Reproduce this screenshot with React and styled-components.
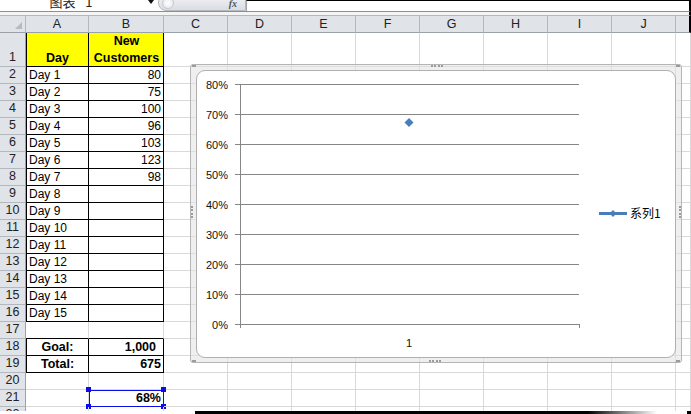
import React from 'react'
import styled, { createGlobalStyle } from 'styled-components'

const GlobalStyle = createGlobalStyle`
	html, body {
		margin: 0;
		padding: 0;
		background: #fff;
	}
	body {
		font-family: "Liberation Sans", Arial, sans-serif;
		width: 691px;
		height: 414px;
		overflow: hidden;
	}
`

const Window = styled.div`
	position: relative;
	width: 691px;
	height: 414px;
	overflow: hidden;
	display: flex;
	flex-direction: column;
	color: #000;
`

const FormulaBar = styled.div`
	height: 11px;
	display: flex;
	border-bottom: 1px solid #8f8f8f;
	border-right: 2px solid #000;
	overflow: hidden;
`

const NameBox = styled.div`
	position: relative;
	width: 158px;
	display: flex;
	justify-content: center;
	font-family: "Noto Sans CJK SC", sans-serif;
	font-size: 13px;
	line-height: 13px;
	word-spacing: 7px;
	color: #222;
	& > span {
		margin-top: -5px;
		margin-left: -16px;
	}
`

const DropArrow = styled.i`
	position: absolute;
	right: 4px;
	top: 0;
	width: 0;
	height: 0;
	border-left: 3px solid transparent;
	border-right: 3px solid transparent;
	border-top: 4px solid #111;
`

const Splitter = styled.div`
	position: relative;
	width: 78px;
	margin-top: -6px;
	border: 1px solid #b7bbc1;
	border-radius: 8px 0 0 8px;
	background: linear-gradient(#f4f5f7, #d9dce1);
	display: flex;
	justify-content: flex-end;
	align-items: flex-end;
	padding: 0 8px 1px 0;
	font-family: "Liberation Serif", serif;
	font-style: italic;
	font-weight: 700;
	font-size: 10px;
	color: #555;
	&::before {
		content: '';
		position: absolute;
		left: 3px;
		top: 2px;
		width: 10px;
		height: 10px;
		border-radius: 50%;
		background: radial-gradient(#fff, #e2e4e8);
		border: 1px solid #c5c9ce;
	}
`

const FormulaInput = styled.div`
	flex: 1;
	border-top: 1px solid #000;
	border-left: 1px solid #a0a4aa;
	background: #fff;
`

const Gap = styled.div`
	height: 3px;
	background: #f4f4f4;
	border-right: 2px solid #000;
`

const Sheet = styled.div`
	position: relative;
	display: grid;
	grid-template-columns: 26px 63px 75px repeat(8, 64px) 1fr;
	grid-template-rows: 18px 34px repeat(21, 17px);
	height: 396px;
	overflow: hidden;
`

const Head = styled.div`
	box-sizing: border-box;
	background: #e0e3e8;
	border-top: 1px solid #b3b8be;
	border-right: ${p => p.$last ? '2px solid #000' : '1px solid #b3b8be'};
	border-bottom: 1px solid #9ba1a8;
	display: flex;
	align-items: center;
	justify-content: center;
	font-size: 12.5px;
	color: #222;
	position: relative;
`

const Corner = styled(Head)`
	&::after {
		content: '';
		position: absolute;
		right: 3px;
		bottom: 3px;
		width: 0;
		height: 0;
		border-left: 7px solid transparent;
		border-bottom: 7px solid #b6bbc1;
	}
`

const RowHead = styled.div`
	box-sizing: border-box;
	background: #e0e3e8;
	border-right: 1px solid #9ba1a8;
	border-bottom: 1px solid #b3b8be;
	display: flex;
	align-items: flex-end;
	justify-content: center;
	padding-bottom: 1px;
	font-size: 12.5px;
	line-height: 15px;
	color: #222;
`

const Cell = styled.div`
	box-sizing: border-box;
	position: relative;
	border-right: 1px solid ${p => p.$boxed ? '#000' : '#d9d9d9'};
	border-bottom: 1px solid ${p => p.$boxed || p.$under ? '#000' : '#d9d9d9'};
	box-shadow: ${p => p.$leftEdge ? 'inset 1px 0 0 #000' : 'none'};
	background: ${p => p.$fill || 'transparent'};
	font-size: ${p => p.$bold ? '12.5px' : '12px'};
	font-weight: ${p => p.$bold ? 700 : 400};
	line-height: ${p => p.$tall ? '16.5px' : '15px'};
	display: flex;
	align-items: flex-end;
	justify-content: ${p => p.$align === 'right' ? 'flex-end' : p.$align === 'center' ? 'center' : 'flex-start'};
	text-align: ${p => p.$align || 'left'};
	padding: 0 ${p => p.$padR ?? 2}px 0 3px;
	white-space: pre-line;
	${p => p.$selected && `
		outline: 1px solid #0c0ce6;
		outline-offset: -1px;
	`}
`

const Handle = styled.i`
	position: absolute;
	width: 5px;
	height: 5px;
	background: #0c0ce6;
	${p => p.$top ? 'top: -3px;' : 'bottom: -3px;'}
	${p => p.$left ? 'left: -3px;' : 'right: -3px;'}
`

const ChartFrame = styled.div`
	position: absolute;
	left: 190px;
	top: 49px;
	width: 492px;
	height: 299px;
	box-sizing: border-box;
	border: 1px solid #b5b5b5;
	border-radius: 3px;
	background: rgba(226, 226, 226, 0.55);
	padding: 5px 5px 4px 5px;
	z-index: 2;
`

const ChartArea = styled.div`
	height: 100%;
	box-sizing: border-box;
	background: #fff;
	border: 1px solid #b0b0b0;
	border-radius: 9px;
	overflow: hidden;
`

const Dots = styled.i`
	position: absolute;
	${p => p.$vertical ? `
		width: 0;
		height: ${p.$len || 12}px;
		border-left: 2px dotted #9c9c9c;
	` : `
		width: ${p.$len || 12}px;
		height: 0;
		border-top: 2px dotted #9c9c9c;
	`}
`

const Footer = styled.div`
	height: 3px;
	display: flex;
`

const FooterPart = styled.div`
	width: ${p => p.$w ? p.$w + 'px' : 'auto'};
	flex: ${p => p.$w ? 'none' : 1};
	background: ${p => p.$bg};
`

const cols = ['A', 'B', 'C', 'D', 'E', 'F', 'G', 'H', 'I', 'J']
const customers = [80, 75, 100, 96, 103, 123, 98]

const buildRows = () => {
	const rows = []
	rows.push({ n: 1, a: { text: 'Day', bold: true, align: 'center', fill: '#ffff00', boxed: true, leftEdge: true }, b: { text: 'New\nCustomers', bold: true, align: 'center', fill: '#ffff00', boxed: true, tall: true } })
	for (let r = 2; r <= 16; r++) {
		const v = customers[r - 2]
		rows.push({ n: r, a: { text: `Day ${r - 1}`, boxed: true, leftEdge: true }, b: { text: v != null ? String(v) : '', align: 'right', boxed: true } })
	}
	rows.push({ n: 17, a: { under: true }, b: { under: true } })
	rows.push({ n: 18, a: { text: 'Goal:', bold: true, align: 'center', boxed: true, leftEdge: true }, b: { text: '1,000', bold: true, align: 'right', boxed: true, padR: 7 } })
	rows.push({ n: 19, a: { text: 'Total:', bold: true, align: 'center', boxed: true, leftEdge: true }, b: { text: '675', bold: true, align: 'right', boxed: true } })
	rows.push({ n: 20, a: {}, b: {} })
	rows.push({ n: 21, a: {}, b: { text: '68%', bold: true, align: 'right', selected: true } })
	rows.push({ n: 22, a: {}, b: {} })
	return rows
}

const SheetCell = ({ text, bold, align, fill, boxed, leftEdge, under, tall, padR, selected }) => (
	<Cell $bold={bold} $align={align} $fill={fill} $boxed={boxed} $leftEdge={leftEdge} $under={under} $tall={tall} $padR={padR} $selected={selected}>
		{text}
		{selected && <>
			<Handle $top $left />
			<Handle $top />
			<Handle $left />
			<Handle />
		</>}
	</Cell>
)

const BLUE = '#4a7ebb'
const GRID = '#868686'
const ticks = [80, 70, 60, 50, 40, 30, 20, 10, 0]
const yOf = v => 13.5 + (80 - v) * 3

const Chart = () => (
	<ChartFrame>
		<Dots style={{ left: 240, top: 0 }} />
		<Dots style={{ left: 238, bottom: 0 }} />
		<Dots $vertical style={{ left: 0, top: 141 }} />
		<Dots $vertical style={{ right: 0, top: 141 }} />
		<Dots $len={4} style={{ left: 1, top: 0 }} />
		<Dots $len={4} style={{ right: 1, top: 0 }} />
		<Dots $len={4} style={{ left: 1, bottom: 0 }} />
		<Dots $len={4} style={{ right: 1, bottom: 0 }} />
		<ChartArea>
			<svg width="478" height="285" viewBox="0 0 478 285" style={{ display: 'block' }}>
				{ticks.map(v => (
					<g key={v}>
						<line x1="38" x2="382" y1={yOf(v)} y2={yOf(v)} stroke={GRID} strokeWidth="1" />
						<text x="31" y={yOf(v) + 4} textAnchor="end" fontFamily="Liberation Sans, sans-serif" fontSize="11" fill="#111">{v}%</text>
					</g>
				))}
				<line x1="43.5" x2="43.5" y1="13" y2="257" stroke={GRID} strokeWidth="1" />
				<line x1="382.5" x2="382.5" y1="253" y2="257" stroke={GRID} strokeWidth="1" />
				<polygon points="212,47 216.5,51.5 212,56 207.5,51.5" fill={BLUE} />
				<text x="212" y="276" textAnchor="middle" fontFamily="Liberation Sans, sans-serif" fontSize="11" fill="#111">1</text>
				<line x1="402" x2="430" y1="142.5" y2="142.5" stroke={BLUE} strokeWidth="3" />
				<polygon points="416,139 419.5,142.5 416,146 412.5,142.5" fill={BLUE} />
				<text x="433" y="147" fontFamily="Noto Sans CJK SC, sans-serif" fontSize="12" fill="#000">系列1</text>
			</svg>
		</ChartArea>
	</ChartFrame>
)

export default function App() {
	const rows = buildRows()
	return (
		<Window>
			<GlobalStyle />
			<FormulaBar>
				<NameBox>
					<span>图表 1</span>
					<DropArrow />
				</NameBox>
				<Splitter>fx</Splitter>
				<FormulaInput />
			</FormulaBar>
			<Gap />
			<Sheet>
				<Corner />
				{cols.map(c => <Head key={c}>{c}</Head>)}
				<Head $last />
				{rows.map(row => (
					<React.Fragment key={row.n}>
						<RowHead>{row.n}</RowHead>
						<SheetCell {...row.a} />
						<SheetCell {...row.b} />
						{cols.slice(2).map(c => <Cell key={c} />)}
						<Cell />
					</React.Fragment>
				))}
				<Chart />
			</Sheet>
			<Footer>
				<FooterPart $w={195} $bg="#fff" />
				<FooterPart $bg="linear-gradient(90deg, #000 0%, #000 85%, #fff 100%)" />
				<FooterPart $w={30} $bg="#fff" />
				<FooterPart $w={4} $bg="#000" />
			</Footer>
		</Window>
	)
}
